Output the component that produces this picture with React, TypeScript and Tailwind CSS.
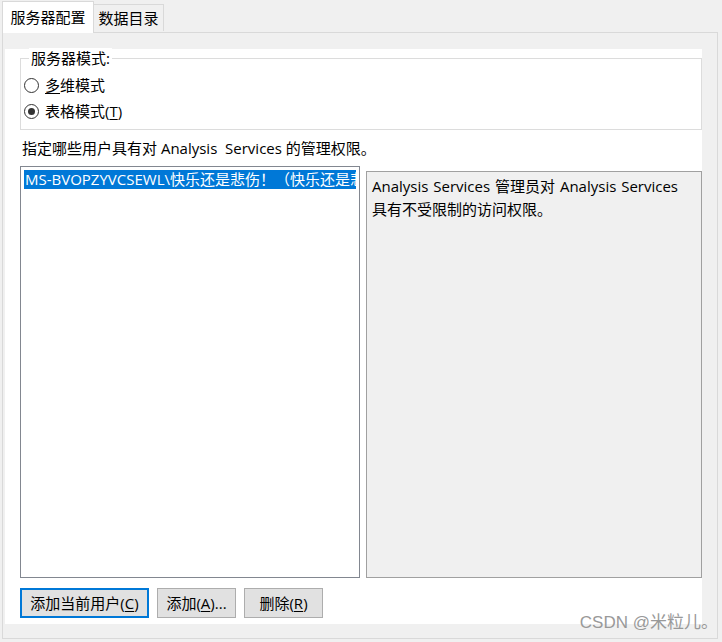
import React, { useState } from 'react';

const font = { fontFamily: '"Open Sans", "Noto Sans CJK SC", sans-serif' };

const Radio: React.FC<{ checked: boolean; onClick: () => void; children: React.ReactNode }> = ({ checked, onClick, children }) => (
  <div className="flex items-center h-[26px] cursor-default" onClick={onClick}>
    <span className="w-[15px] h-[15px] rounded-full border border-[#333] bg-white flex items-center justify-center mr-[6px]">
      {checked && <span className="w-[7px] h-[7px] rounded-full bg-[#333]" />}
    </span>
    <span className="text-[15px] text-[#000] leading-none">{children}</span>
  </div>
);

const Btn: React.FC<{ primary?: boolean; w: string; children: React.ReactNode }> = ({ primary, w, children }) => (
  <button
    className={
      primary
        ? `${w} h-[30px] bg-[#e1e1e1] border-2 border-[#0078d7] text-[15px] text-black leading-none`
        : `${w} h-[30px] bg-[#e1e1e1] border border-[#adadad] text-[15px] text-black leading-none`
    }
    style={font}
  >
    {children}
  </button>
);

const App: React.FC = () => {
  const [mode, setMode] = useState<'multi' | 'tabular'>('tabular');
  const [tab, setTab] = useState(0);

  return (
    <div className="w-[722px] h-[642px] bg-[#f0f0f0] relative overflow-hidden select-none" style={font}>
      {/* tabs */}
      <div className="flex h-[32px] items-end pl-[2px]">
        <div
          onClick={() => setTab(0)}
          className={`h-[32px] w-[92px] border border-b-0 border-[#d9d9d9] flex items-center justify-center text-[15px] text-black relative z-10 -mb-px ${tab === 0 ? 'bg-white' : 'bg-white'}`}
        >
          服务器配置
        </div>
        <div
          onClick={() => setTab(1)}
          className="h-[27px] w-[70px] bg-[#f0f0f0] border border-l-0 border-b-0 border-[#d9d9d9] flex items-center justify-center text-[15px] text-black mb-[1px]"
        >
          数据目录
        </div>
      </div>

      {/* tab panel */}
      <div className="ml-[2px] w-[716px] h-[607px] border border-[#d9d9d9] bg-[#f0f0f0] pt-[16px] pl-[2px] pr-[15px]">
        <div className="bg-white w-[697px] h-[575px] pl-[15px] pt-[9px] flex flex-col">
          {/* group box */}
          <div className="relative w-[682px] h-[72px] border border-[#dcdcdc] pt-[13px] pl-[3px]">
            <span className="absolute left-[8px] -top-[11px] bg-white px-[2px] text-[15px] leading-[20px] text-black">
              服务器模式:
            </span>
            <Radio checked={mode === 'multi'} onClick={() => setMode('multi')}>
              <span className="underline underline-offset-2">多</span>维模式
            </Radio>
            <Radio checked={mode === 'tabular'} onClick={() => setMode('tabular')}>
              表格模式(<span className="underline underline-offset-2">T</span>)
            </Radio>
          </div>

          <div className="h-[36px] flex items-center pl-[2px] text-[15px] text-black whitespace-pre">
            指定哪些用户具有对 Analysis  Services 的管理权限。
          </div>

          <div className="flex gap-[6px] h-[412px]">
            <div className="w-[340px] h-full border border-[#828790] bg-white p-[3px] overflow-hidden">
              <div className="h-[19px] bg-[#0078d7] text-white text-[15px] leading-[19px] whitespace-nowrap overflow-hidden pl-[1px]">
                MS-BVOPZYVCSEWL\快乐还是悲伤！（快乐还是悲伤！）
              </div>
            </div>
            <div className="mt-[5px] w-[336px] flex-1 border border-[#a0a0a0] bg-[#f0f0f0] px-[5px] pt-[3px] text-[15px] leading-[23px] text-black [word-spacing:1px]">
              Analysis Services 管理员对 Analysis Services
              <br />
              具有不受限制的访问权限。
            </div>
          </div>

          <div className="flex gap-[8px] mt-[10px]">
            <Btn primary w="w-[129px]">
              添加当前用户(<span className="underline underline-offset-2">C</span>)
            </Btn>
            <Btn w="w-[79px]">
              添加(<span className="underline underline-offset-2">A</span>)...
            </Btn>
            <Btn w="w-[79px]">
              删除(<span className="underline underline-offset-2">R</span>)
            </Btn>
          </div>
        </div>
      </div>

      <div className="absolute right-[4px] bottom-[11px] text-[17px] text-[#999] leading-none" style={{ fontFamily: '"Liberation Sans", "Noto Sans CJK SC", sans-serif' }}>
        CSDN @米粒儿。
      </div>
    </div>
  );
};

export default App;
